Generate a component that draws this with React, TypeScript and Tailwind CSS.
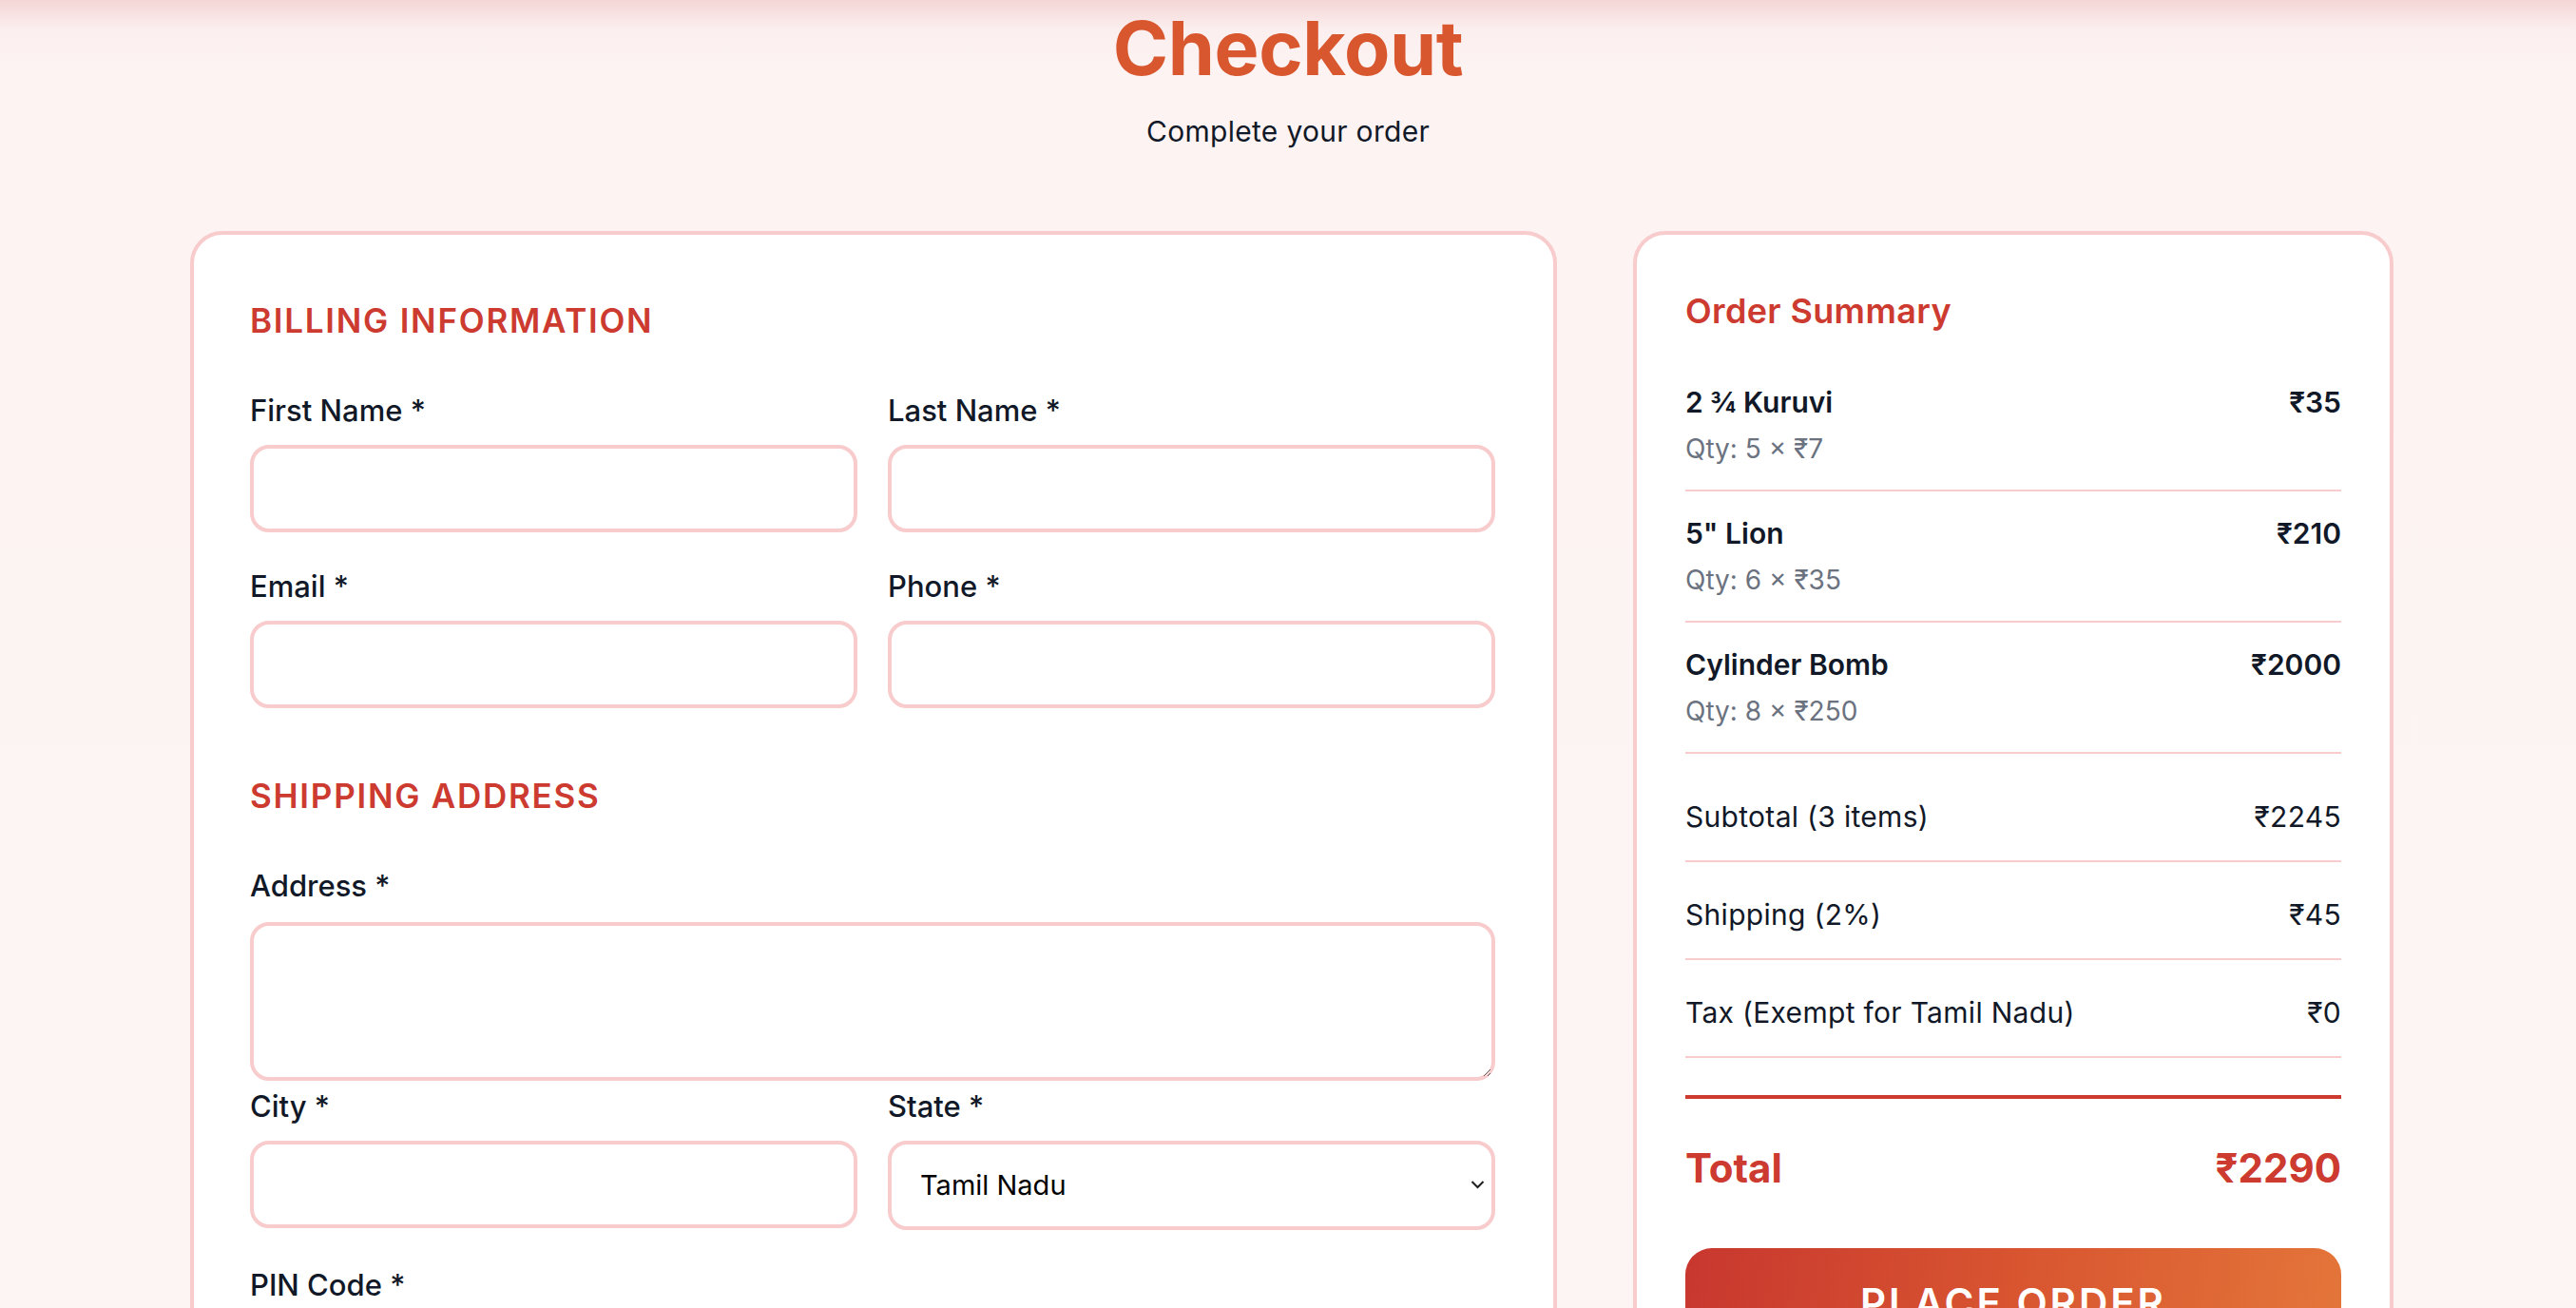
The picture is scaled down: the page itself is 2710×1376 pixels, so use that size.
import React from "react";

const FONT = "font-['Inter','Noto_Sans',sans-serif]";

const Field = ({ label, className = "" }: { label: string; className?: string }) => {
  return (
    <div className={className}>
      <label className="block text-[31px] leading-[42px] font-medium text-[#111827]">{label}</label>
      <input
        type="text"
        className="mt-[15px] block w-full h-[92px] rounded-[20px] border-4 border-[#f8cccc] bg-white px-[28px] text-[29px] outline-none"
      />
    </div>
  );
};

const items = [
  { name: "2 ¾ Kuruvi", price: "₹35", qty: "Qty: 5 × ₹7" },
  { name: '5" Lion', price: "₹210", qty: "Qty: 6 × ₹35" },
  { name: "Cylinder Bomb", price: "₹2000", qty: "Qty: 8 × ₹250" },
];

const totals = [
  { label: "Subtotal (3 items)", value: "₹2245" },
  { label: "Shipping (2%)", value: "₹45" },
  { label: "Tax (Exempt for Tamil Nadu)", value: "₹0" },
];

export default function App() {
  return (
    <div
      className={`${FONT} min-h-screen w-full bg-[linear-gradient(to_bottom,#f5d6d6_0px,#fbeeee_30px,#fdf3f3_70px,#fdf4f4_100%)] pb-[120px]`}
    >
      {/* header */}
      <div className="pt-[10px] text-center">
        <h1 className="text-[79px] leading-[80px] font-bold text-[#d9572f] tracking-[-0.005em]">Checkout</h1>
        <p className="mt-[28px] text-[30px] leading-[40px] tracking-[0.01em] text-[#111827]">Complete your order</p>
      </div>

      <div className="mt-[85px] pl-[200px] flex items-start gap-[80px]">
        {/* billing + shipping form */}
        <div className="w-[1438px] shrink-0 rounded-[34px] border-4 border-[#f8cccc] bg-white pl-[59px] pr-[61px] pt-[68px] pb-[60px]">
          <h2 className="text-[35px] leading-[44px] font-semibold tracking-[0.05em] text-[#cc3a30]">BILLING INFORMATION</h2>
          <div className="mt-[52px] grid grid-cols-2 gap-x-[32px] gap-y-[36px]">
            <Field label="First Name *" />
            <Field label="Last Name *" />
            <Field label="Email *" />
            <Field label="Phone *" />
          </div>

          <h2 className="mt-[70px] text-[35px] leading-[44px] font-semibold tracking-[0.05em] text-[#cc3a30]">SHIPPING ADDRESS</h2>
          <div className="mt-[52px]">
            <label className="block text-[31px] leading-[42px] font-medium text-[#111827]">Address *</label>
            <textarea className="mt-[17px] block w-full h-[167px] rounded-[20px] border-4 border-[#f8cccc] bg-white px-[28px] py-[20px] text-[29px] outline-none resize-y" />
          </div>
          <div className="mt-[6px] grid grid-cols-2 gap-x-[32px]">
            <Field label="City *" />
            <div>
              <label className="block text-[31px] leading-[42px] font-medium text-[#111827]">State *</label>
              <div className="relative mt-[15px]">
                <select
                  defaultValue="Tamil Nadu"
                  className="block w-full h-[94px] appearance-none rounded-[20px] border-4 border-[#f8cccc] bg-white pl-[30px] pr-[60px] text-[29px] text-black outline-none"
                >
                  <option>Tamil Nadu</option>
                  <option>Kerala</option>
                  <option>Karnataka</option>
                </select>
                <svg
                  className="pointer-events-none absolute right-[11px] top-[41px]"
                  width="15"
                  height="10"
                  viewBox="0 0 15 10"
                  fill="none"
                >
                  <path d="M1.5 2 L7.5 8 L13.5 2" stroke="#1f1f1f" strokeWidth="2" />
                </svg>
              </div>
            </div>
          </div>
          <Field label="PIN Code *" className="mt-[37px] w-[637px]" />
        </div>

        {/* order summary */}
        <div className="w-[800px] shrink-0 rounded-[34px] border-4 border-[#f8cccc] bg-white px-[51px] pt-[58px] pb-[60px]">
          <h2 className="text-[36px] leading-[44px] font-semibold tracking-[0.01em] text-[#cc3a30]">Order Summary</h2>
          <div className="mt-[30px]">
            {items.map((it) => (
              <div key={it.name} className="py-[24px] border-b-2 border-[#f8cccc]">
                <div className="flex justify-between text-[30px] leading-[40px] font-semibold text-[#111827]">
                  <span>{it.name}</span>
                  <span>{it.price}</span>
                </div>
                <div className="mt-[10px] text-[28px] leading-[38px] text-[#6b7280]">{it.qty}</div>
              </div>
            ))}
          </div>
          <div>
            {totals.map((t, i) => (
              <div
                key={t.label}
                className={`flex justify-between border-b-2 border-[#f8cccc] pb-[26px] text-[30px] leading-[40px] tracking-[0.01em] text-[#111827] ${i === 0 ? "pt-[46px]" : "pt-[35px]"}`}
              >
                <span>{t.label}</span>
                <span>{t.value}</span>
              </div>
            ))}
          </div>
          <div className="mt-[39px] h-[4px] bg-[#cc3a30]" />
          <div className="mt-[47px] flex justify-between text-[42px] leading-[52px] font-bold text-[#cc3a30]">
            <span>Total</span>
            <span>₹2290</span>
          </div>
          <button className="mt-[58px] flex w-full h-[115px] items-center justify-center rounded-[28px] bg-[linear-gradient(100deg,#c8372f_0%,#d85530_50%,#e4763a_100%)] text-[42px] font-semibold tracking-[0.07em] text-white">
            PLACE ORDER
          </button>
        </div>
      </div>
    </div>
  );
}
